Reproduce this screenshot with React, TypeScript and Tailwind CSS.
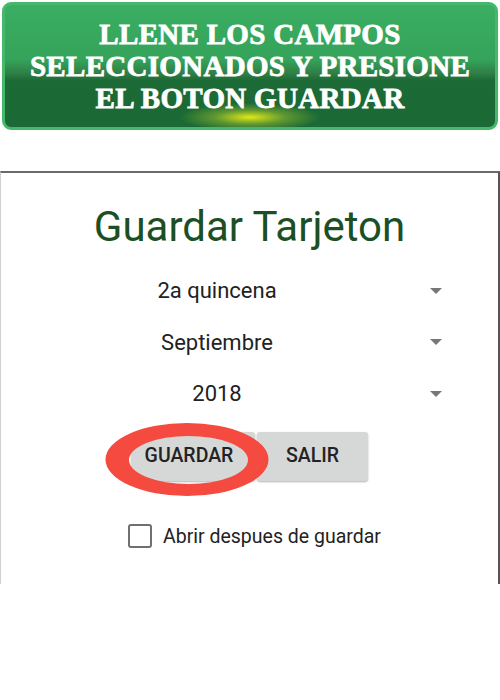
import React from "react";

const rows = ["2a quincena", "Septiembre", "2018"];

function Caret() {
  return (
    <svg width="14" height="8" viewBox="0 0 14 8">
      <path d="M1 1 L13 1 L7 7 Z" fill="#777" />
    </svg>
  );
}

export default function App() {
  return (
    <div className="w-[500px] h-[700px] bg-white relative" style={{ fontFamily: "Roboto, 'Noto Sans', sans-serif" }}>
      {/* banner */}
      <div className="pt-[2px] px-[2px]">
        <div
          className="relative h-[128px] rounded-[9px] border-[3px] border-[#46b86a] overflow-hidden flex flex-col items-center justify-center"
          style={{
            background:
              "radial-gradient(ellipse 70px 14px at 50% 92%, rgba(235,240,20,0.95), rgba(200,220,40,0.4) 50%, rgba(0,0,0,0) 100%), linear-gradient(to bottom, #3aae62 0%, #35a35a 45%, #2f7f46 56%, #1c6a36 62%, #1b6a36 100%)",
          }}
        >
          <div
            className="text-white font-bold text-[29px] leading-[32px] text-center tracking-[0.3px]"
            style={{ fontFamily: "'Liberation Serif', 'DejaVu Serif', serif", WebkitTextStroke: "0.8px #fff" }}
          >
            <div>LLENE LOS CAMPOS</div>
            <div>SELECCIONADOS Y PRESIONE</div>
            <div>EL BOTON GUARDAR</div>
          </div>
        </div>
      </div>

      {/* screenshot frame */}
      <div className="mt-[41px] h-[413px] border-t-2 border-r-2 border-t-[#6a6a6a] border-r-[#555] border-l border-l-[#d0d0d0]">
        <div className="pt-[30px] text-center text-[42px] leading-[48px] text-[#1d4f24]">Guardar Tarjeton</div>

        <div className="mt-[14px] flex flex-col">
          {rows.map((r) => (
            <div key={r} className="h-[51.5px] flex items-center ml-[115px] w-[340px] pr-[13px]">
              <div className="w-[202px] text-center text-[22px] text-[#222]">{r}</div>
              <div className="ml-auto">
                <Caret />
              </div>
            </div>
          ))}
        </div>

        <div className="relative mt-[12px] flex ml-[130px] h-[49px]">
          <div className="w-[124px] h-[49px] pr-[8px] bg-[#d6d7d7] rounded-[3px] shadow-[0_1px_2px_rgba(0,0,0,0.3)] flex items-center justify-center text-[19.5px] font-medium text-[#222]">
            GUARDAR
          </div>
          <div className="ml-[2px] w-[111px] h-[49px] bg-[#d6d7d7] rounded-[3px] shadow-[0_1px_2px_rgba(0,0,0,0.3)] flex items-center justify-center text-[19.5px] font-medium text-[#222]">
            SALIR
          </div>
          <svg className="absolute left-[-28px] top-[-10px]" width="170" height="80" viewBox="0 0 170 80">
            <path
              fillRule="evenodd"
              fill="#f44a3f"
              d="M2.5 37.5 a81.5 36.5 0 1 0 163 0 a81.5 36.5 0 1 0 -163 0 Z M26 38 a59.5 24 0 1 0 119 0 a59.5 24 0 1 0 -119 0 Z"
            />
          </svg>
        </div>

        <div className="mt-[41px] ml-[127px] flex items-center">
          <div className="w-[24px] h-[24px] border-2 border-[#707070] rounded-[3px]" />
          <div className="ml-[11px] text-[19.5px] text-[#222]">Abrir despues de guardar</div>
        </div>
      </div>
    </div>
  );
}
